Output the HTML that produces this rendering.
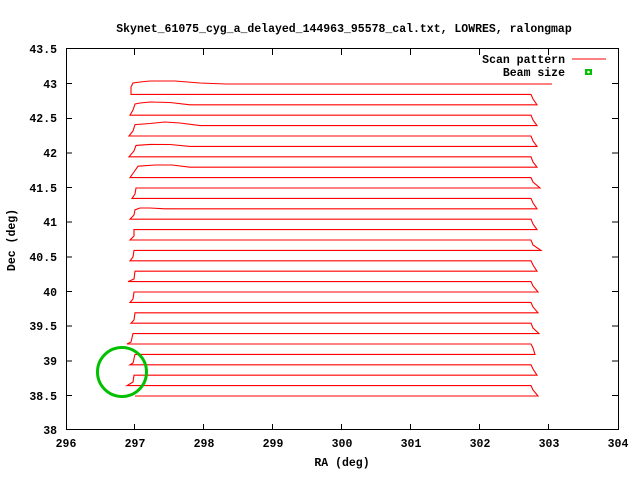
<!DOCTYPE html>
<html><head><style>
html,body{margin:0;padding:0;background:#fff;}
svg{display:block;}
text{font-family:"Liberation Mono",monospace;font-weight:bold;font-size:11.5px;fill:#000;}
</style></head><body>
<svg width="640" height="480" viewBox="0 0 640 480">
<rect x="0" y="0" width="640" height="480" fill="#fff"/>
<text x="344" y="32" text-anchor="middle">Skynet_61075_cyg_a_delayed_144963_95578_cal.txt, LOWRES, ralongmap</text>
<g stroke="#000" stroke-width="1" fill="none" shape-rendering="crispEdges">
<rect x="66.5" y="48.5" width="552" height="381"/>
<path d="M66 83.6h6M66 118.3h6M66 152.9h6M66 187.6h6M66 222.2h6M66 256.8h6M66 291.5h6M66 326.1h6M66 360.8h6M66 395.4h6
M618 83.6h-6M618 118.3h-6M618 152.9h-6M618 187.6h-6M618 222.2h-6M618 256.8h-6M618 291.5h-6M618 326.1h-6M618 360.8h-6M618 395.4h-6
M134.5 430v-6M203.5 430v-6M272.5 430v-6M341.5 430v-6M410.5 430v-6M479.5 430v-6M548.5 430v-6
M134.5 49v6M203.5 49v6M272.5 49v6M341.5 49v6M410.5 49v6M479.5 49v6M548.5 49v6"/>
</g>
<g text-anchor="end">
<text x="57" y="53">43.5</text>
<text x="57" y="88">43</text>
<text x="57" y="122">42.5</text>
<text x="57" y="157">42</text>
<text x="57" y="192">41.5</text>
<text x="57" y="226">41</text>
<text x="57" y="261">40.5</text>
<text x="57" y="296">40</text>
<text x="57" y="330">39.5</text>
<text x="57" y="365">39</text>
<text x="57" y="400">38.5</text>
<text x="57" y="434">38</text>
</g>
<g text-anchor="middle">
<text x="66" y="447">296</text>
<text x="135" y="447">297</text>
<text x="204" y="447">298</text>
<text x="273" y="447">299</text>
<text x="342" y="447">300</text>
<text x="411" y="447">301</text>
<text x="480" y="447">302</text>
<text x="549" y="447">303</text>
<text x="618" y="447">304</text>
<text x="342" y="466">RA (deg)</text>
<text x="0" y="0" transform="translate(15,240) rotate(-90)">Dec (deg)</text>
</g>
<text x="565" y="63" text-anchor="end">Scan pattern</text>
<text x="565" y="76" text-anchor="end">Beam size</text>
<line x1="572" y1="59" x2="606" y2="59" stroke="#f00" stroke-width="1"/>
<rect x="585" y="69" width="7" height="6" fill="#00c000"/>
<circle cx="588.5" cy="72" r="1.3" fill="#fff"/>
<path fill="none" stroke="#f00" stroke-width="1.1" d="
M552 84 L226 84 L200 83 L175 81 L160 81 L150 81 L140 82 L133 83 L131 87 L131 94.4 L531 94.4 L533 99 L537 104.8
L190 104.8 L170 102.5 L150 102 L140 103 L135 104 L133 110 L130 115.2 L531 115.2 L533 120 L537 125.6
L200 125.6 L180 123 L165 122 L150 123.5 L135 124.6 L133 131 L129 136 L531 136 L533 141 L537 146.4
L190 146.4 L170 144.5 L150 144.4 L136 145.4 L134 151 L129 156.8 L531 156.8 L533 162 L537 167.2
L190 167.2 L172 165 L155 165 L138 166.2 L134 172 L130 177.6 L531 177.6 L533 182 L540 188
L136 188 L135 194 L132 198.4 L531 198.4 L533 203 L537 208.8
L165 208.8 L150 208 L140 208 L135 209.8 L134 215 L130 219.2 L531 219.2 L533 224 L537 229.6
L134 229.6 L134 236 L130 240 L531 240 L533 245 L541 250.4
L134 250.4 L133 257 L130 260.8 L531 260.8 L533 265 L537 271.2
L135 271.2 L134 279 L128 281.6 L531 281.6 L533 286 L538 292
L134 292 L133 299 L130 302.4 L531 302.4 L533 307 L538 312.8
L135 312.8 L134 320 L131 323.2 L531 323.2 L533 328 L539 333.6
L133 333.6 L131 342 L127 344 L531 344 L533 348 L535 354.4
L135 354.4 L133 363 L130 364.8 L531 364.8 L533 369 L537 375.2
L134 375.2 L133 382 L127 385.6 L531 385.6 L533 390 L538 396
L135 396"/>
<circle cx="122" cy="372" r="24.5" fill="none" stroke="#00c000" stroke-width="3"/>
</svg>
</body></html>
